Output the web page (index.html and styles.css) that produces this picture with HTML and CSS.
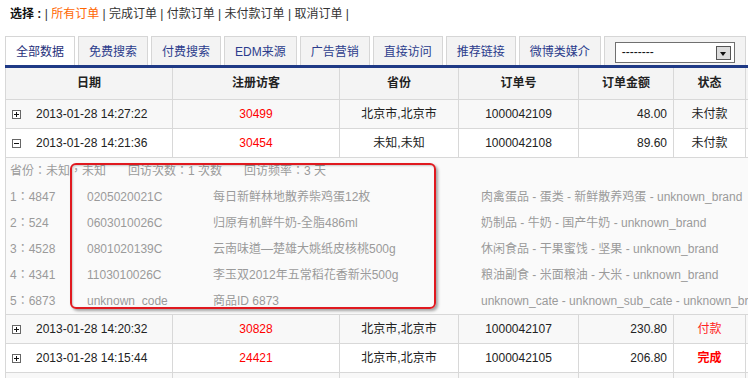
FILE: index.html
```html
<!DOCTYPE html>
<html>
<head>
    <meta charset="utf-8">
    <title>订单列表</title>
    <link rel="stylesheet" href="styles.css">
</head>
<body>
    <div class="container">

        <div class="filter">
            <b>选择 :</b> | <a class="current">所有订单</a> | <a>完成订单</a> | <a>付款订单</a> | <a>未付款订单</a> | <a>取消订单</a> |
        </div>

        <ul class="tabs">
            <li class="active">全部数据</li>
            <li>免费搜索</li>
            <li>付费搜索</li>
            <li>EDM来源</li>
            <li>广告营销</li>
            <li>直接访问</li>
            <li>推荐链接</li>
            <li>微博类媒介</li>
            <li class="tab-select">
                <div class="select"><span>--------</span><i class="arrow"></i></div>
            </li>
        </ul>

        <table class="orders">
            <colgroup>
                <col class="c-date"><col class="c-visitor"><col class="c-prov"><col class="c-no"><col class="c-money"><col class="c-status"><col class="c-more">
            </colgroup>
            <thead>
                <tr><th>日期</th><th>注册访客</th><th>省份</th><th>订单号</th><th>订单金额</th><th>状态</th><th></th></tr>
            </thead>
            <tbody>
                <tr class="odd">
                    <td class="date"><span class="toggle plus"></span>2013-01-28 14:27:22</td>
                    <td class="visitor">30499</td><td>北京市,北京市</td><td>1000042109</td>
                    <td class="money">48.00</td><td>未付款</td><td></td>
                </tr>
                <tr>
                    <td class="date"><span class="toggle"></span>2013-01-28 14:21:36</td>
                    <td class="visitor">30454</td><td>未知,未知</td><td>1000042108</td>
                    <td class="money">89.60</td><td>未付款</td><td></td>
                </tr>
                <tr class="detail">
                    <td colspan="7">
                        <div class="detail-box">
                            <div class="summary">
                                <span>省份：未知，未知</span><span>回访次数：1 次数</span><span>回访频率：3 天</span>
                            </div>
                            <div class="item"><span>1：4847</span><span>0205020021C</span><span>每日新鲜林地散养柴鸡蛋12枚</span><span>肉禽蛋品 - 蛋类 - 新鲜散养鸡蛋 - unknown_brand</span></div>
                            <div class="item"><span>2：524</span><span>0603010026C</span><span>归原有机鲜牛奶-全脂486ml</span><span>奶制品 - 牛奶 - 国产牛奶 - unknown_brand</span></div>
                            <div class="item"><span>3：4528</span><span>0801020139C</span><span>云南味道—楚雄大姚纸皮核桃500g</span><span>休闲食品 - 干果蜜饯 - 坚果 - unknown_brand</span></div>
                            <div class="item"><span>4：4341</span><span>1103010026C</span><span>李玉双2012年五常稻花香新米500g</span><span>粮油副食 - 米面粮油 - 大米 - unknown_brand</span></div>
                            <div class="item"><span>5：6873</span><span>unknown_code</span><span>商品ID 6873</span><span>unknown_cate - unknown_sub_cate - unknown_brand</span></div>
                            <div class="mark"></div>
                        </div>
                    </td>
                </tr>
                <tr class="odd">
                    <td class="date"><span class="toggle plus"></span>2013-01-28 14:20:32</td>
                    <td class="visitor">30828</td><td>北京市,北京市</td><td>1000042107</td>
                    <td class="money">230.80</td><td class="paid">付款</td><td></td>
                </tr>
                <tr>
                    <td class="date"><span class="toggle plus"></span>2013-01-28 14:15:44</td>
                    <td class="visitor">24421</td><td>北京市,北京市</td><td>1000042105</td>
                    <td class="money">206.80</td><td class="done">完成</td><td></td>
                </tr>
                <tr class="odd">
                    <td class="date"></td><td></td><td></td><td></td><td></td><td></td><td></td>
                </tr>
            </tbody>
        </table>
    </div>
</body>
</html>
```

FILE: styles.css
```css
* {
    margin: 0;
    padding: 0;
}

html {
    overflow: hidden;
}

body {
    padding-left: 5px;
    font-family: "Liberation Sans", "Noto Sans CJK SC", sans-serif;
    font-size: 12px;
    color: #222;
    background: white;
}

.filter {
    padding-left: 5px;
    line-height: 28px;
    color: #333;
}

.filter b {
    color: #111;
}

.filter .current {
    color: #ff6600;
}

.tabs {
    list-style: none;
    display: flex;
    gap: 3px;
    margin-top: 8px;
    border-bottom: 3px solid #1f3a86;
}

.tabs li {
    height: 29px;
    line-height: 31px;
    padding: 0 10px;
    border: 1px solid #d6d6d6;
    border-bottom: none;
    background: #f3f3f3;
    color: #2b3c8c;
    box-sizing: border-box;
}

.tabs li.active {
    background: white;
    color: #1f2f7a;
}

.tabs .tab-select {
    width: 142px;
    padding-top: 5px;
    line-height: normal;
}

.select {
    position: relative;
    width: 120px;
    height: 21px;
    border: 1px solid #707070;
    box-sizing: border-box;
    background: white;
    color: #111;
    line-height: 19px;
    padding-left: 6px;
}

.select .arrow {
    position: absolute;
    right: 3px;
    top: 3px;
    width: 15px;
    height: 14px;
    border: 1px solid #555;
    box-sizing: border-box;
    background: #dcdcdc;
}

.select .arrow::after {
    content: "";
    position: absolute;
    left: 3px;
    top: 5px;
    border-left: 3.5px solid transparent;
    border-right: 3.5px solid transparent;
    border-top: 4px solid #111;
}

.orders {
    width: 820px;
    table-layout: fixed;
    border-collapse: collapse;
}

.c-date { width: 167px; }
.c-visitor { width: 167px; }
.c-prov { width: 119px; }
.c-no { width: 120px; }
.c-money { width: 95px; }
.c-status { width: 72px; }
.c-more { width: 80px; }

.orders th {
    height: 31px;
    line-height: 31px;
    background: #f4f4f4;
    color: #222;
    border: 1px solid #d8d8d8;
    border-top: none;
}

.orders td {
    height: 28px;
    line-height: 28px;
    text-align: center;
    border: 1px solid #d8d8d8;
    white-space: nowrap;
}

.orders tr.odd td {
    background: #f8f8f8;
}

.orders td.date {
    text-align: left;
    padding-left: 6px;
}

.toggle {
    position: relative;
    display: inline-block;
    width: 9px;
    height: 9px;
    border: 1px solid #666;
    box-sizing: border-box;
    background: white;
    margin-right: 15px;
    vertical-align: -1px;
}

.toggle::before {
    content: "";
    position: absolute;
    left: 1px;
    top: 3px;
    width: 5px;
    height: 1px;
    background: #111;
}

.toggle.plus::after {
    content: "";
    position: absolute;
    left: 3px;
    top: 1px;
    width: 1px;
    height: 5px;
    background: #111;
}

.orders td.visitor {
    color: #ff0000;
}

.orders td.money {
    text-align: right;
    padding-right: 6px;
}

.orders td.paid {
    color: #ff2222;
}

.orders td.done {
    color: #ff0000;
    font-weight: bold;
}

.orders tr.detail td {
    height: auto;
    text-align: left;
    background: #fafafa;
    padding: 0;
}

/* 明细里的全角冒号居中显示 */
.detail-box {
    position: relative;
    padding-left: 4px;
    line-height: 26px;
    color: #9a9a9a;
    font-family: "Liberation Sans", "Noto Sans CJK TC", "Noto Sans CJK SC", sans-serif;
}

.summary span {
    margin-right: 22px;
}

.item {
    display: grid;
    grid-template-columns: 77px 126px 268px auto;
}

.mark {
    position: absolute;
    left: 64px;
    top: 5px;
    width: 366px;
    height: 146px;
    border: 2px solid #e0191f;
    border-radius: 6px;
    box-sizing: border-box;
    box-shadow: 2px 2px 3px rgba(0, 0, 0, 0.35), inset 1px 1px 2px rgba(0, 0, 0, 0.2);
}
```
